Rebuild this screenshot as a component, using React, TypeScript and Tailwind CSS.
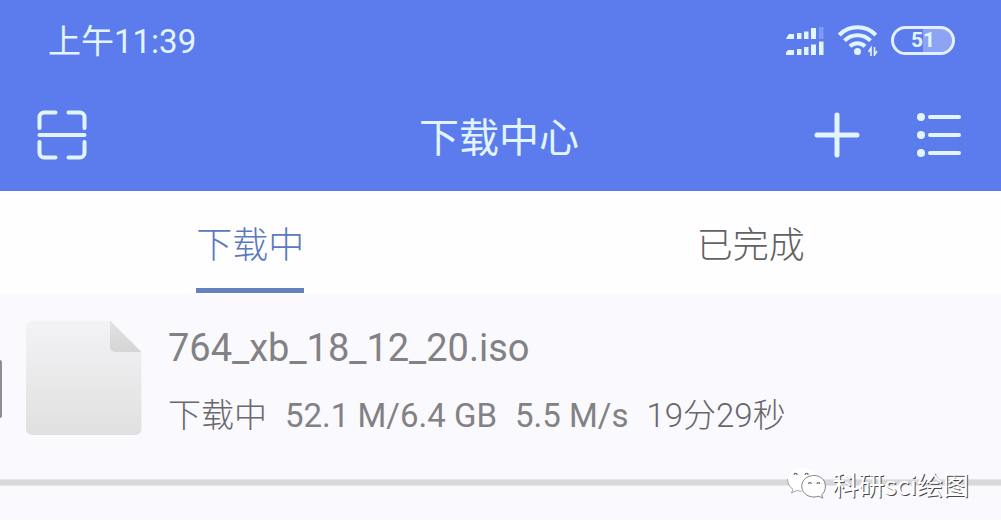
import React, { useState } from "react";

const tabs = [
  { id: "active", label: "下载中" },
  { id: "done", label: "已完成" },
];

const SignalIcon: React.FC = () => (
  <svg className="h-8 w-10" viewBox="0 0 40 32" fill="currentColor">
    <path d="M2 13l2-3h5v5H1zM12 9h4.500v6H12zM19 7.500h4.500V15H19zM26 4h5v11h-5z" />
    <path d="M34 3h4.500v12H34z" opacity="0.25" />
    <path d="M1 28.500l2-2.500h6v5H1zM12 25h4.500v6H12zM19 23h4.500v8H19zM26 20.500h5V31h-5zM34 17.500h4.500V31H34z" />
  </svg>
);

const WifiIcon: React.FC = () => (
  <svg
    className="h-8 w-10"
    viewBox="0 0 40 32"
    fill="none"
    stroke="currentColor"
    strokeWidth="4"
  >
    <path d="M1.200 11a25.500 25.500 0 0 1 36.600 0" />
    <path d="M6.500 16.700a18 18 0 0 1 26 0" />
    <path d="M12 22.300a10.500 10.500 0 0 1 15 0" />
    <circle cx="19.500" cy="27.500" r="3.500" fill="currentColor" stroke="none" />
    <path d="M30.500 28l2.500-4v8M36.500 23v8l2.500-4" strokeWidth="1.600" />
  </svg>
);

const ScanIcon: React.FC = () => (
  <svg
    className="h-[50px] w-[50px]"
    viewBox="0 0 50 50"
    fill="none"
    stroke="currentColor"
    strokeWidth="4"
    strokeLinecap="round"
  >
    <path d="M2.500 18V7a4.500 4.500 0 0 1 4.500-4.500h11.500M31.500 2.500H43A4.500 4.500 0 0 1 47.500 7v11M47.500 32v11a4.500 4.500 0 0 1-4.500 4.500H31.500M18.500 47.500H7A4.500 4.500 0 0 1 2.500 43V32" />
    <path d="M2.500 25h45" />
  </svg>
);

const FileIcon: React.FC = () => (
  <svg className="h-[116px] w-[116px] shrink-0" viewBox="0 0 116 116">
    <defs>
      <linearGradient id="paper" x1="0" y1="0" x2="0" y2="1">
        <stop offset="0" stopColor="#f3f2f4" />
        <stop offset="1" stopColor="#e1e0e1" />
      </linearGradient>
      <linearGradient id="fold" x1="0" y1="0" x2="0" y2="1">
        <stop offset="0" stopColor="#e2e1e3" />
        <stop offset="1" stopColor="#d6d5d6" />
      </linearGradient>
    </defs>
    <path
      d="M6 .5H84L115.500 32v77a6 6 0 0 1-6 6H6a6 6 0 0 1-6-6V6.500a6 6 0 0 1 6-6z"
      fill="url(#paper)"
    />
    <path d="M84 .5L115.500 32H89a5 5 0 0 1-5-5z" fill="url(#fold)" />
  </svg>
);

const ChatIcon: React.FC = () => (
  <svg className="h-8 w-10" viewBox="0 0 40 32" strokeLinejoin="round">
    <path
      d="M16 1C8 1 1.500 6 1.500 13c0 4 2 7 5.500 9.300L5.500 26l5-2.500c2 .7 4 .8 6.500.8 7 0 14-4.500 14-11.300S24 1 16 1z"
      fill="#fff"
    />
    <path
      d="M1.500 12c0 4.500 2 7.800 5.500 10.300L5.500 26l5-2.500 5 .8"
      fill="none"
      stroke="#9a999d"
      strokeWidth="0.900"
    />
    <path
      d="M28 8.500c-7 0-12.300 4.600-12.300 10.700S21 30 28 30c1.700 0 3.300-.3 4.800-.8l4 2-1-3.500c2.400-2 3.600-5 3.600-8.500 0-6.100-4.800-10.700-11.400-10.700z"
      fill="#fff"
      stroke="#77767a"
      strokeWidth="0.900"
    />
    <g fill="none" stroke="#6f6e72" strokeWidth="1.200">
      <path d="M8 8a1.600 1.600 0 0 1 3.200 0M19 8a1.600 1.600 0 0 1 3.200 0" />
      <path d="M22.500 17a1.400 1.400 0 0 1 2.800 0M31 17a1.400 1.400 0 0 1 2.800 0" />
    </g>
  </svg>
);

const StatusBar: React.FC = () => (
  <div className="flex h-20 items-center justify-between pr-[46px] pl-12">
    <span className="pt-1 text-[33px] leading-10">上午11:39</span>
    <div className="flex items-center gap-[13px]">
      <SignalIcon />
      <WifiIcon />
      <div className="flex h-[29px] w-16 items-center justify-center rounded-full border-[3px] border-[#e2f0ff] bg-linear-to-r from-transparent from-50% to-white/30 to-50% text-[21px] leading-6 font-bold">
        51
      </div>
    </div>
  </div>
);

const DownloadItem: React.FC = () => (
  <section className="relative flex h-[185px] gap-[26px] pt-[26px] pl-[26px]">
    <span className="absolute top-[66px] left-0 h-[58px] w-0.5 rounded-r-sm bg-[#8f8e92]" />
    <FileIcon />
    <div className="text-[#828184]">
      <p className="text-[38px] leading-14 font-normal">764_xb_18_12_20.iso</p>
      <p className="flex gap-[18px] pt-4 text-[33px] leading-12">
        <span className="text-[#68676a]">下载中</span>
        <span className="font-normal">52.1 M/6.4 GB</span>
        <span className="font-normal">5.5 M/s</span>
        <span className="text-[#68676a]">19分29秒</span>
      </p>
    </div>
  </section>
);

const App: React.FC = () => {
  const [current, setCurrent] = useState("active");

  return (
    <div className="min-h-screen bg-white font-['Roboto','Noto_Sans_CJK_SC',sans-serif]">
      <header className="h-[191px] bg-[#5c7cee] text-[#e2f5ff]">
        <StatusBar />
        <div className="grid grid-cols-3 items-center pt-6 pr-10 pl-[37px]">
          <button aria-label="扫描" className="w-fit">
            <ScanIcon />
          </button>
          <h1 className="pt-2 text-center text-[40px] leading-[54px]">
            下载中心
          </h1>
          <div className="flex items-center justify-end gap-[57px]">
            <button aria-label="添加">
              <svg
                className="h-[46px] w-[46px]"
                viewBox="0 0 46 46"
                fill="none"
                stroke="currentColor"
                strokeWidth="5"
                strokeLinecap="round"
              >
                <path d="M23 3v40M3 23h40" />
              </svg>
            </button>
            <button aria-label="列表">
              <svg
                className="h-[46px] w-11"
                viewBox="0 0 44 46"
                fill="none"
                stroke="currentColor"
                strokeWidth="4"
                strokeLinecap="round"
              >
                <path d="M13 5h29M13 23h29M13 41h29" />
                <g fill="currentColor" stroke="none">
                  <circle cx="4" cy="5" r="4" />
                  <circle cx="4" cy="23" r="4" />
                  <circle cx="4" cy="41" r="4" />
                </g>
              </svg>
            </button>
          </div>
        </div>
      </header>

      <nav className="grid h-[103px] grid-cols-2 justify-items-center bg-[#fefeff] pb-px">
        {tabs.map((tab) => (
          <button
            key={tab.id}
            onClick={() => setCurrent(tab.id)}
            className={
              current === tab.id
                ? "border-b-[5px] border-[#6580bf] pt-3 text-[36px] font-light text-[#5b79bd]"
                : "border-b-[5px] border-transparent pt-3 text-[36px] font-light text-[#626164]"
            }
          >
            {tab.label}
          </button>
        ))}
      </nav>

      <main className="bg-[#faf9fd] font-light">
        <DownloadItem />
        <div className="h-[7px] border-y border-[#e6e5e8] bg-[#d8d7da]" />
        <div className="h-[34px]" />
      </main>

      <div className="absolute top-[466px] right-8 flex items-center gap-1.5">
        <ChatIcon />
        <span className="pt-0.5 font-['Noto_Sans_CJK_SC',sans-serif] text-[26px] leading-8 font-normal text-white [text-shadow:1px_1px_0_#48474b]">
          科研sci绘图
        </span>
      </div>
    </div>
  );
};

export default App;
